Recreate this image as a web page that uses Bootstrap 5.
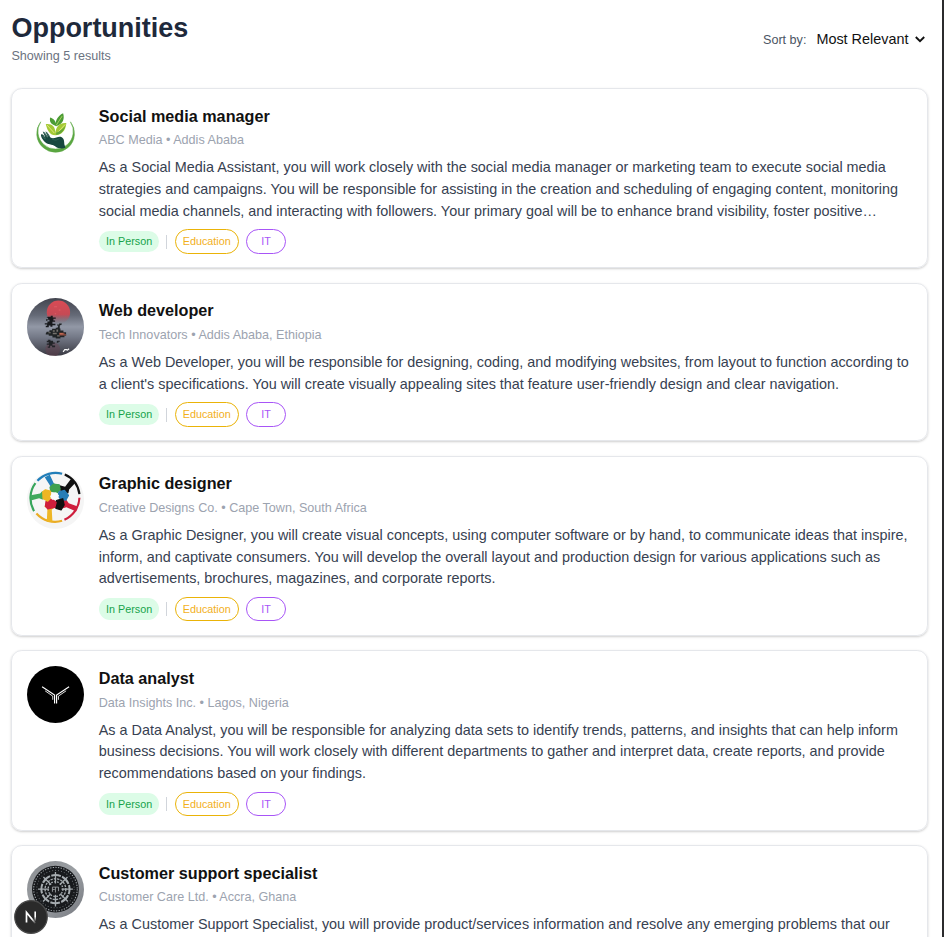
<!DOCTYPE html>
<html lang="en">
<head>
<meta charset="utf-8">
<meta name="viewport" content="width=device-width, initial-scale=1">
<title>Opportunities</title>
<link href="https://cdn.jsdelivr.net/npm/bootstrap@5.3.0/dist/css/bootstrap.min.css" rel="stylesheet">
<style>
html{font-size:14.4px}
body{font-family:"Liberation Sans",Arial,sans-serif;height:100vh;overflow:hidden;background:#fff;border-right:2px solid #2b2b2d;color:#111827}
.page{padding:11.8px 14px 0 11.4px}
.page-title{font-size:27px;line-height:32.4px;color:#1e293b;letter-spacing:0}
.sub{font-size:12.6px;line-height:18px;color:#6b7280;padding-top:2.6px}
.page-head{margin-bottom:23.4px;padding-right:2.6px}
.sort{padding-top:2px}
.sort-label{font-size:12.6px;color:#4b5563;padding-top:2px}
.sort-value{font-size:14.4px;line-height:21.6px;color:#111;margin-left:10px}
.sort-arrow{margin-left:7px}
.job{border:1px solid #e5e7eb;border-radius:10.8px;padding:14.4px 14.4px 13.9px;box-shadow:0 1px 3px rgba(0,0,0,.1),0 1px 2px rgba(0,0,0,.1);gap:14.4px}
.avatar{width:57.6px;height:57.6px;border-radius:50%}
.job-title{font-size:16.2px;line-height:25px;color:#111}
.job-org{font-size:12.6px;line-height:18px;color:#9ca3af;margin-top:2.7px}
.job-text{font-size:14.4px;line-height:21.7px;color:#374151;margin:8.2px 0 7px}
.job-tags{height:24px;gap:7.2px;font-size:10.8px;line-height:14.4px}
.pill{border-radius:99px;padding:4px 7px;border:1px solid}
.pill-mode{background:#dcfce7;color:#16a34a;border:0;padding:3.6px 7.2px}
.pill-edu{color:#f2b01c;border-color:#eab308}
.pill-it{color:#a855f7;width:40px;text-align:center}
.sep{width:1px;height:14px;background:#d1d5db;margin:0 .4px 0 -.4px}
.dev-badge{left:14px;bottom:3px;width:34px;height:34px}
</style>
<script src="https://cdn.jsdelivr.net/npm/bootstrap@5.3.0/dist/js/bootstrap.bundle.min.js"></script>
</head>
<body>
<main class="page">
<header class="page-head d-flex justify-content-between align-items-center">
  <div>
    <h1 class="page-title fw-bold mb-0">Opportunities</h1>
    <p class="sub mb-0">Showing 5 results</p>
  </div>
  <div class="sort d-flex align-items-center">
    <span class="sort-label">Sort by:</span>
    <span class="sort-value">Most Relevant</span>
    <svg class="sort-arrow" width="10" height="7" viewBox="0 0 10 7" fill="none" stroke="#111" stroke-width="1.9"><path d="M.8 1 5 5.2 9.2 1"/></svg>
  </div>
</header>

<div class="d-flex flex-column" style="gap:14.4px">
<article class="job d-flex align-items-start">
  <svg class="avatar flex-shrink-0" viewBox="20.7 24.6 172.8 172.8">
    <path d="M62 78A56.6 56.6 0 1 0 151 78A53 53 0 1 1 62 78Z" fill="#5aa641" stroke="#5aa641" stroke-width="1.5"/>
    <path d="M104 89C91 84 88 76 90 65C102 69 109 76 107 91C105 75 112 60 129 52C134 68 130 84 108 91Z" fill="#4c9c35"/>
    <path d="M108 89 126 61" stroke="#a9d25d" stroke-width="3"/>
    <path d="M106 118C86 117 82 101 77 85C95 83 106 91 106 113C107 92 119 80 139 82C136 104 126 117 106 118Z" fill="#a4c936"/>
    <path d="M81 88 103 112M135 86 110 113" stroke="#e0e77b" stroke-width="3"/>
    <path d="M108 117C122 116 131 107 136 90C128 101 119 107 108 111Z" fill="#64a638"/>
    <path d="M63 116C68 114 72 121 76 125L68 108C73 105 79 118 84 124L76 108C82 107 86 117 92 126C105 131 113 119 125 124C133 129 132 137 133 146L136 156C124 160 112 157 105 151C96 143 83 149 72 136C66 129 61 120 63 116Z" fill="#17483f"/>
    <path d="M95 129C104 135 112 133 118 128" fill="none" stroke="#3b6f61" stroke-width="2"/>
    <path d="M67 120 76 130M70 108 82 125M78 107 88 123" stroke="#739a8a" stroke-width="1.5"/>
  </svg>
  <div>
    <h2 class="job-title fw-bold mb-0">Social media manager</h2>
    <div class="job-org">ABC Media • Addis Ababa</div>
    <p class="job-text">As a Social Media Assistant, you will work closely with the social media manager or marketing team to execute social media<br>strategies and campaigns. You will be responsible for assisting in the creation and scheduling of engaging content, monitoring<br>social media channels, and interacting with followers. Your primary goal will be to enhance brand visibility, foster positive…</p>
    <div class="job-tags d-flex align-items-center"><span class="pill pill-mode">In Person</span><span class="sep"></span><span class="pill pill-edu">Education</span><span class="pill pill-it">IT</span></div>
  </div>
</article>

<article class="job d-flex align-items-start">
  <svg class="avatar flex-shrink-0" viewBox="20.7 24.6 172.8 172.8">
    <defs>
      <linearGradient id="dusk" x1="0" y1="0" x2="0" y2="1"><stop offset="0" stop-color="#42444e"/><stop offset=".3" stop-color="#656a77"/><stop offset=".5" stop-color="#9298a6"/><stop offset=".68" stop-color="#747987"/><stop offset="1" stop-color="#393942"/></linearGradient>
      <linearGradient id="sun" x1="0" y1="0" x2="0" y2="1"><stop offset="0" stop-color="#d94b55"/><stop offset=".6" stop-color="#c64a55"/><stop offset="1" stop-color="#7d7680" stop-opacity=".1"/></linearGradient>
    </defs>
    <rect x="20" y="24" width="174" height="174" fill="url(#dusk)"/>
    <ellipse cx="98" cy="179" rx="22" ry="22" fill="#67404d" opacity=".45"/>
    <circle cx="115" cy="67" r="35" fill="url(#sun)"/>
    <path d="M102 49h9v3h-9zM116 59h5v3h-5zM104 70h4v3h-4z" fill="#e05c64"/>
    <path d="M83 81h9v-3h6v5h9v4h-7v5h5v4h-8v6h9v4h-9v5h-6v-4h-5v5h-9v-4h4v-4h-7v-4h8v-5h6v-5h-6v3h-4v-5h6v-4h-5z" fill="#17191c"/>
    <path d="M77 131 80 126H88V121H96V117H107V114H112L115 108 111 107V104H117V101H125V104L119 107V116H121V122H130V127H138V138H133V142H121V146H107V143H97V138H86V134H77Z" fill="#202426"/>
    <path d="M85 127h7v3h-7zM98 121h6v5h-6zM98 129h12v4h-12zM109 119h5v7h-5zM111 136h8v4h-8z" fill="#74716c"/>
    <path d="M117 129h16v4h5v4h-20z" fill="#914e42"/><path d="M119 130h9v3h-9z" fill="#d27558"/>
    <path d="M83 150h8v3h8v5h5v4h-7v5h8v5h-9v-4h-6v6h-7v-4h4v-5h-7v-4h6v-4h-6v-4h5zM112 153h7v3h-4v3h-5v-4z" fill="#212327"/>
    <path d="M129 186 134 179.5H139L142 181 147 177" fill="none" stroke="#fff" stroke-width="3.4"/>
  </svg>
  <div>
    <h2 class="job-title fw-bold mb-0">Web developer</h2>
    <div class="job-org">Tech Innovators • Addis Ababa, Ethiopia</div>
    <p class="job-text">As a Web Developer, you will be responsible for designing, coding, and modifying websites, from layout to function according to<br>a client's specifications. You will create visually appealing sites that feature user-friendly design and clear navigation.</p>
    <div class="job-tags d-flex align-items-center"><span class="pill pill-mode">In Person</span><span class="sep"></span><span class="pill pill-edu">Education</span><span class="pill pill-it">IT</span></div>
  </div>
</article>

<article class="job d-flex align-items-start">
  <svg class="avatar flex-shrink-0" viewBox="20.7 24.6 172.8 172.8">
    <rect x="20" y="24" width="174" height="174" fill="#f5f5f5"/>
    <g fill="none" stroke-width="6.5">
      <path d="M52 54A75 75 0 0 1 126 33" stroke="#217eb9"/>
      <path d="M134 35A75 75 0 0 1 178 94" stroke="#111"/>
      <path d="M178 105A75 75 0 0 1 133 171" stroke="#ce1e3c"/>
      <path d="M126 174A75 75 0 0 1 49 152" stroke="#eaac24"/>
      <path d="M42 145A75 75 0 0 1 46 61" stroke="#37a55b"/>
    </g>
    <path d="M74 43 89 36 101 61 107 65 118 65 122 81 111 89 92 72Z" fill="#247fba"/>
    <path d="M153 48 166 60 147 80 145 91 132 93 118 81 119 67 135 72Z" fill="#101010"/>
    <path d="M173 131 168 146 139 133 126 137 117 118 124 107 138 110 146 121Z" fill="#cf1d3c"/>
    <path d="M97 177 80 177 82 137 73 132 80 119 97 117 103 134 95 141Z" fill="#eeb625"/>
    <path d="M32 113 32 97 60 92 66 85 78 89 82 106 67 110 57 106Z" fill="#40a95d"/>
    <g stroke-width="4" stroke-linejoin="round">
      <path d="M90 73 100 64 117 66 120 79 112 89 92 85Z" fill="#3da04f" stroke="#3da04f"/>
      <path d="M117 87 133 83 145 98 137 112 122 110 114 98Z" fill="#277eb7" stroke="#277eb7"/>
      <path d="M110 113 128 108 132 126 123 141 108 137 103 124Z" fill="#101010" stroke="#101010"/>
      <path d="M78 116 96 109 108 119 104 134 83 138 76 130Z" fill="#d01e3c" stroke="#d01e3c"/>
      <path d="M68 87 76 81 91 85 92 104 83 115 69 107Z" fill="#edb625" stroke="#edb625"/>
    </g>
    <path d="M95 91 108 88 117 98 111 110 96 111 90 101Z" fill="#fafafa"/>
  </svg>
  <div>
    <h2 class="job-title fw-bold mb-0">Graphic designer</h2>
    <div class="job-org">Creative Designs Co. • Cape Town, South Africa</div>
    <p class="job-text">As a Graphic Designer, you will create visual concepts, using computer software or by hand, to communicate ideas that inspire,<br>inform, and captivate consumers. You will develop the overall layout and production design for various applications such as<br>advertisements, brochures, magazines, and corporate reports.</p>
    <div class="job-tags d-flex align-items-center"><span class="pill pill-mode">In Person</span><span class="sep"></span><span class="pill pill-edu">Education</span><span class="pill pill-it">IT</span></div>
  </div>
</article>

<article class="job d-flex align-items-start">
  <svg class="avatar flex-shrink-0" viewBox="20.7 24.6 172.8 172.8">
    <rect x="20" y="24" width="174" height="174" fill="#000"/>
    <g fill="none" stroke="#fff" stroke-width="3.4"><path d="M66 87 103.5 112V137M147 87 109.5 112V137"/><path d="M75 99 98 115V126M138 99 115 115V126" stroke-width="2.6"/></g>
  </svg>
  <div>
    <h2 class="job-title fw-bold mb-0">Data analyst</h2>
    <div class="job-org">Data Insights Inc. • Lagos, Nigeria</div>
    <p class="job-text">As a Data Analyst, you will be responsible for analyzing data sets to identify trends, patterns, and insights that can help inform<br>business decisions. You will work closely with different departments to gather and interpret data, create reports, and provide<br>recommendations based on your findings.</p>
    <div class="job-tags d-flex align-items-center"><span class="pill pill-mode">In Person</span><span class="sep"></span><span class="pill pill-edu">Education</span><span class="pill pill-it">IT</span></div>
  </div>
</article>

<article class="job d-flex align-items-start">
  <svg class="avatar flex-shrink-0" viewBox="0 0 172 172">
    <defs><linearGradient id="steel" x1="0" y1="0" x2="1" y2="1"><stop offset="0" stop-color="#8b8e92"/><stop offset=".5" stop-color="#9b9fa3"/><stop offset="1" stop-color="#74777e"/></linearGradient></defs>
    <rect width="172" height="172" fill="url(#steel)"/>
    <circle cx="85" cy="84" r="70" fill="#17191c"/>
    <g fill="none" stroke="#a6acb0">
      <circle cx="85" cy="84" r="65" stroke-width="3" stroke-dasharray="4 4"/>
      <circle cx="85" cy="84" r="56" stroke="#62676b" stroke-width="3" stroke-dasharray="3 6"/>
      <circle cx="85" cy="84" r="42" stroke-width="6" stroke-dasharray="29 4" stroke-dashoffset="14"/>
      <circle cx="85" cy="84" r="31" stroke-width="4" stroke-dasharray="7 3"/>
      <circle cx="85" cy="84" r="22" stroke-width="4" stroke-dasharray="5 4"/>
      <path d="M85 33V67M85 101V136M33 84H66M103 84H137M49 48 72 71M99 98 122 121M121 48 98 71M71 98 48 121" stroke-width="4"/>
    </g>
    <circle cx="85" cy="84" r="15" fill="#1c1d20"/><path d="M76 92V78H94V90M85 78V94M76 85H83" stroke="#a0a5a9" stroke-width="2.5" fill="none"/>
  </svg>
  <div>
    <h2 class="job-title fw-bold mb-0">Customer support specialist</h2>
    <div class="job-org">Customer Care Ltd. • Accra, Ghana</div>
    <p class="job-text">As a Customer Support Specialist, you will provide product/services information and resolve any emerging problems that our</p>
  </div>
</article>
</div>
</main>
<svg class="dev-badge position-fixed" viewBox="0 0 34 34">
  <defs><linearGradient id="diag" x1="0" y1="0" x2="1" y2="1"><stop offset=".6" stop-color="#fff"/><stop offset="1" stop-color="#fff" stop-opacity=".1"/></linearGradient><linearGradient id="stem" x1="0" y1="0" x2="0" y2="1"><stop offset=".5" stop-color="#fff"/><stop offset="1" stop-color="#fff" stop-opacity="0"/></linearGradient></defs>
  <circle cx="17" cy="17" r="16.3" fill="#2a2a2a" stroke="#4a4a4a" stroke-width="1.2"/>
  <path d="M12.5 22.4V12.4L21.4 23.2" fill="none" stroke="url(#diag)" stroke-width="1.7"/><path d="M20.4 11.5h1.6v10h-1.6z" fill="url(#stem)"/>
</svg>
</body>
</html>
